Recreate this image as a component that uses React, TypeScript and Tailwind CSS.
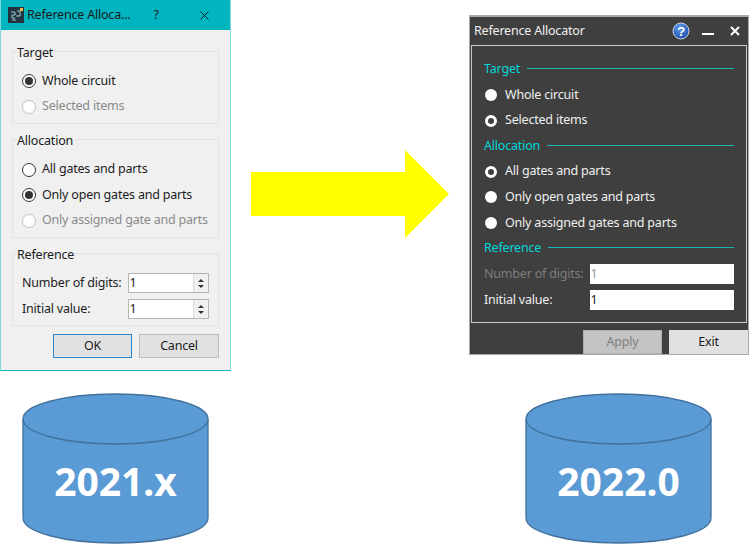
import type { ReactNode } from "react";
import { X } from "lucide-react";

const font = "font-['Noto_Sans','Open_Sans',sans-serif]";
const uiText = "text-[12.5px] tracking-[-0.2px]";

function LightRadio({ label, checked, disabled }: { label: string; checked?: boolean; disabled?: boolean }) {
  return (
    <div className={`flex h-[25.5px] items-center gap-[6px] whitespace-nowrap ${uiText} ${disabled ? "text-[#8a8a8a]" : "text-[#1c1c1c]"}`}>
      <span className={`flex h-[14px] w-[14px] items-center justify-center rounded-full border bg-white ${disabled ? "border-[#c4c4c4]" : "border-[#333333]"}`}>
        {checked && <span className="h-[8px] w-[8px] rounded-full bg-[#333333]" />}
      </span>
      {label}
    </div>
  );
}

function LightGroup({ title, className, children }: { title: string; className: string; children: ReactNode }) {
  return (
    <div className={`relative border border-[#e3e3e3] pl-[9px] ${className}`}>
      <span className={`absolute left-[4px] top-[-8px] bg-[#f0f0f0] pr-[1px] leading-[18px] text-[#1c1c1c] ${uiText}`}>{title}</span>
      {children}
    </div>
  );
}

function Spin({ label }: { label: string }) {
  return (
    <div className={`flex h-[26px] items-center text-[#1c1c1c] ${uiText}`}>
      <span className="w-[105.5px] whitespace-nowrap">{label}</span>
      <div className="flex h-[20px] w-[81px] border border-[#b4b4b4] bg-white">
        <span className="flex-1 pl-[1px] leading-[18px]">1</span>
        <div className="flex w-[15px] flex-col items-center justify-center gap-[3px] border-l border-[#dcdcdc] bg-[#f0f0f0]">
          <span className="h-0 w-0 border-x-[3px] border-b-[3px] border-x-transparent border-b-[#333333]" />
          <span className="h-0 w-0 border-x-[3px] border-t-[3px] border-x-transparent border-t-[#333333]" />
        </div>
      </div>
    </div>
  );
}

function OldDialog() {
  return (
    <div className="absolute left-0 top-0 flex h-[371px] w-[231px] flex-col border-x border-b border-x-[#7fd9df] border-b-[#1fb6c1] bg-[#f0f0f0]">
      <div className={`flex h-[30px] shrink-0 items-center bg-[#00b4c0] pl-[7px] text-[#1a1a1a] ${uiText}`}>
        <svg width="16" height="16" viewBox="0 0 16 16" className="shrink-0">
          <rect width="16" height="16" fill="#23343f" />
          <path d="M3 5h4v3H4v3h3M9 4h3v5H8M4 13h4" fill="none" stroke="#9fc9d6" strokeWidth="1" />
          <rect x="12" y="1" width="3" height="3" fill="#f2b84b" />
        </svg>
        <span className="ml-[3px] w-[112px] whitespace-nowrap">Reference Alloca...</span>
        <span className="ml-[10px] w-[14px] text-center">?</span>
        <X className="ml-[34px] h-[15px] w-[15px]" strokeWidth={1.5} />
      </div>
      <div className="flex flex-1 flex-col px-[11px]">
        <LightGroup title="Target" className="mt-[21px] h-[73px] pt-[16.5px]">
          <LightRadio label="Whole circuit" checked />
          <LightRadio label="Selected items" disabled />
        </LightGroup>
        <LightGroup title="Allocation" className="mt-[15px] h-[99px] pt-[17px]">
          <LightRadio label="All gates and parts" />
          <LightRadio label="Only open gates and parts" checked />
          <LightRadio label="Only assigned gate and parts" disabled />
        </LightGroup>
        <LightGroup title="Reference" className="mt-[15px] h-[73px] pt-[16px]">
          <Spin label="Number of digits:" />
          <Spin label="Initial value:" />
        </LightGroup>
        <div className={`mt-[8px] flex justify-end gap-[7px] text-[#1c1c1c] ${uiText}`}>
          <button className="h-[24px] w-[79px] border border-[#2a86d0] bg-[#e1e1e1]">OK</button>
          <button className="h-[24px] w-[80px] border border-[#bcbcbc] bg-[#e1e1e1]">Cancel</button>
        </div>
      </div>
    </div>
  );
}

function DarkRadio({ label, hollow }: { label: string; hollow?: boolean }) {
  return (
    <div className={`flex h-[25.6px] items-center gap-[8px] whitespace-nowrap pl-px text-[#efefef] ${uiText}`}>
      <span className={`h-[12px] w-[12px] rounded-full ${hollow ? "border-[3px] border-white bg-[#3f3f3f]" : "bg-white"}`} />
      {label}
    </div>
  );
}

function DarkHeading({ title }: { title: string }) {
  return (
    <div className={`flex h-[25.6px] items-center gap-[7px] text-[#00d8dc] ${uiText}`}>
      {title}
      <span className="mt-[-2px] h-px flex-1 bg-[#1eb4b4]" />
    </div>
  );
}

function DarkField({ label, disabled }: { label: string; disabled?: boolean }) {
  return (
    <div className={`flex h-[26px] items-center ${uiText} ${disabled ? "text-[#7c7c7c]" : "text-[#efefef]"}`}>
      <span className="w-[105.5px] whitespace-nowrap">{label}</span>
      <span className={`h-[20px] flex-1 bg-white pl-[1px] leading-[20px] ${disabled ? "text-[#999999]" : "text-[#222222]"}`}>1</span>
    </div>
  );
}

function NewDialog() {
  return (
    <div className="absolute left-[469px] top-[15px] flex h-[340px] w-[280px] flex-col border-x border-b border-t-2 border-[#a8a8a8] bg-[#3f3f3f]">
      <div className={`flex h-[27px] shrink-0 items-center pl-[4px] pt-[1px] text-[#efefef] ${uiText}`}>
        <span className="flex-1">Reference Allocator</span>
        <svg width="18" height="18" viewBox="0 0 18 18">
          <defs>
            <radialGradient id="help" cx="40%" cy="30%" r="80%">
              <stop offset="0%" stopColor="#5f9be8" />
              <stop offset="100%" stopColor="#1a48a8" />
            </radialGradient>
          </defs>
          <circle cx="9" cy="9" r="8" fill="url(#help)" stroke="#c6d3e6" strokeWidth="1" />
          <text x="9" y="13.5" textAnchor="middle" fontSize="13" fontWeight="700" fill="#ffffff" fontFamily="Liberation Sans">?</text>
        </svg>
        <span className="ml-[12px] mt-[5px] h-[2px] w-[12px] bg-white" />
        <svg width="10" height="10" viewBox="0 0 10 10" className="ml-[16px] mr-[8px]">
          <path d="M1 1l8 8M9 1l-8 8" fill="none" stroke="#ffffff" strokeWidth="2" />
        </svg>
      </div>
      <div className="mx-px mt-px h-[278px] shrink-0 border border-[#c8c8c8] px-[12px] pt-[10.6px]">
        <DarkHeading title="Target" />
        <DarkRadio label="Whole circuit" />
        <DarkRadio label="Selected items" hollow />
        <DarkHeading title="Allocation" />
        <DarkRadio label="All gates and parts" hollow />
        <DarkRadio label="Only open gates and parts" />
        <DarkRadio label="Only assigned gates and parts" />
        <DarkHeading title="Reference" />
        <DarkField label="Number of digits:" disabled />
        <DarkField label="Initial value:" />
      </div>
      <div className={`mt-[7px] flex justify-end gap-[7px] ${uiText}`}>
        <button className="h-[24px] w-[79px] border border-[#b0b0b0] bg-[#c4c4c4] text-[#808080]">Apply</button>
        <button className="h-[24px] w-[79px] bg-[#e1e1e1] text-[#1c1c1c]">Exit</button>
      </div>
    </div>
  );
}

function Cylinder({ label, left }: { label: string; left: string }) {
  return (
    <div className={`absolute top-[393px] h-[151px] w-[187px] ${left}`}>
      <svg width="187" height="151" viewBox="0 0 187 151" className="absolute inset-0">
        <path d="M1 26C1 12 42 1 93.500 1S186 12 186 26V125C186 139 145 150 93.500 150S1 139 1 125Z" fill="#5b9bd5" stroke="#41719c" strokeWidth="1.300" />
        <path d="M1 26C1 40 42 51 93.500 51S186 40 186 26" fill="none" stroke="#41719c" strokeWidth="1.300" />
      </svg>
      <div className="absolute inset-x-0 top-[62px] text-center text-[39px] font-bold leading-[51px] text-white">{label}</div>
    </div>
  );
}

export default function App() {
  return (
    <div className={`relative h-[544px] w-[750px] overflow-hidden bg-white ${font}`}>
      <OldDialog />
      <svg width="200" height="90" viewBox="0 0 200 90" className="absolute left-[250px] top-[150px]">
        <polygon points="1,22 155,22 155,0 199,44 155,88 155,66 1,66" fill="#ffff00" />
      </svg>
      <NewDialog />
      <Cylinder label="2021.x" left="left-[22px]" />
      <Cylinder label="2022.0" left="left-[525px]" />
    </div>
  );
}
